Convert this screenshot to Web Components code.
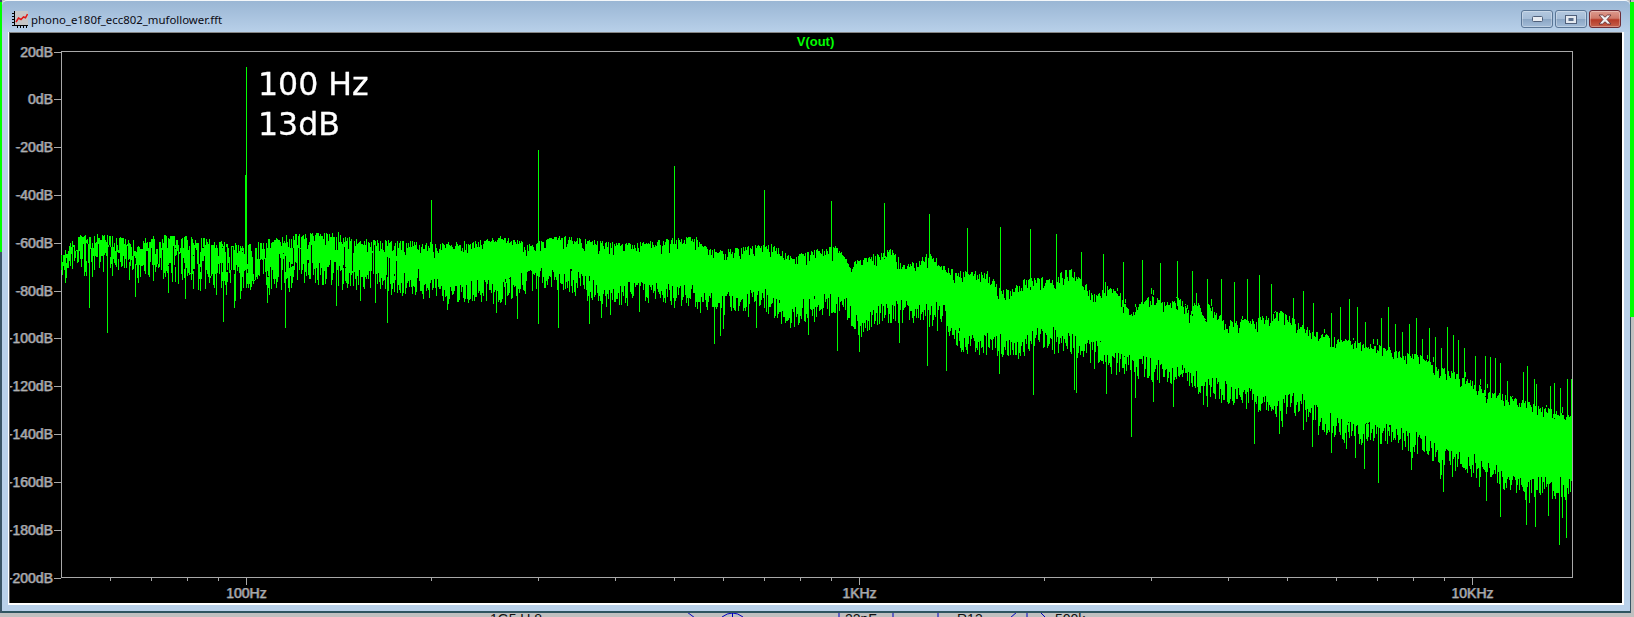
<!DOCTYPE html>
<html>
<head>
<meta charset="utf-8">
<title>phono_e180f_ecc802_mufollower.fft</title>
<style>
  html, body { margin: 0; padding: 0; height: 100%; overflow: hidden; }
  body {
    width: 1634px;
    height: 617px;
    display: flex;
    flex-direction: column;
    background:
      linear-gradient(#00ff00, #00ff00) no-repeat 0 2px / 2px 250px,
      linear-gradient(#00ff00, #00ff00) no-repeat 1630px 2px / 4px 315px,
      linear-gradient(#3a5566, #3a5566) no-repeat 0 0 / 2px 613px,
      linear-gradient(#3a5566, #3a5566) no-repeat 1630px 0 / 1px 613px,
      #c0c0c0;
  }
</style>
</head>
<body>
<template id="caption-button-tpl">
  <style>
    :host { display: block; width: 32px; height: 18px; }
    .btn {
      box-sizing: border-box;
      width: 100%;
      height: 100%;
      border: 1px solid #5a7696;
      border-radius: 3px;
      box-shadow: inset 0 0 0 1px rgba(255,255,255,.3);
      background: linear-gradient(#b3c8df 0%, #a6bdd7 48%, #8ba6c4 52%, #a3bcd8 100%);
      display: flex;
      align-items: center;
      justify-content: center;
    }
    :host([kind=close]) .btn {
      border-color: #6e2c36;
      background: linear-gradient(#dd9a8e 0%, #cf7a6a 45%, #b63a28 55%, #c4604c 100%);
    }
    svg { display: block; }
  </style>
  <div class="btn"></div>
</template>

<script>
// title bar buttons, min / max / close
const GLYPHS = {
  min: '<svg width="11" height="6" viewBox="0 0 11 6"><rect x=".5" y=".5" width="10" height="5" rx="1" fill="#e8ecf2" stroke="#50607a"/></svg>',
  max: '<svg width="12" height="9" viewBox="0 0 12 9"><rect x=".5" y=".5" width="11" height="8" fill="#e4e9f0" stroke="#50607a"/><rect x="3.5" y="3" width="5" height="3" fill="#5a6e8a"/></svg>',
  close: '<svg width="14" height="11" viewBox="0 0 14 11"><path d="M1 1h3.5L7 3.2 9.5 1H13L9 5.5l4 4.5H9.5L7 7.8 4.5 10H1l4-4.5z" fill="#f0f0f2" stroke="#5a2a30" stroke-width=".8"/></svg>'
};

class CaptionButton extends HTMLElement {
  constructor() {
    super();
    this.attachShadow({ mode: 'open' });
    this.shadowRoot.appendChild(document.getElementById('caption-button-tpl').content.cloneNode(true));
  }
  connectedCallback() {
    this.shadowRoot.querySelector('.btn').innerHTML = GLYPHS[this.getAttribute('kind')] || '';
  }
}
customElements.define('caption-button', CaptionButton);

class SpiceWindow extends HTMLElement {
  constructor() {
    super();
    this.attachShadow({ mode: 'open' });
    this.shadowRoot.innerHTML = `
      <style>
        :host {
          display: flex;
          flex-direction: column;
          flex: none;
          box-sizing: border-box;
          width: 1628px;
          height: 613px;
          margin-left: 2px;
          background: #b9d1ea;
          border-bottom: 2px solid #2f5560;
          border-top-left-radius: 5px;
          border-top-right-radius: 5px;
        }
        .bar {
          flex: none;
          box-sizing: border-box;
          height: 32px;
          display: flex;
          align-items: flex-start;
          border-top: 1px solid #f4f7fa;
          border-top-left-radius: 5px;
          border-top-right-radius: 5px;
          background: linear-gradient(#9ab6d4, #b8d0e9);
          padding: 9px 9px 0 10px;
        }
        .icon { flex: none; width: 16px; height: 17px; margin-top: 1px; }
        .name {
          flex: 1;
          margin-left: 3px;
          margin-top: 2px;
          font: 11.400px/16px "Noto Sans", "Open Sans", sans-serif;
          color: #0a0a14;
          white-space: nowrap;
        }
        .buttons { display: flex; gap: 2px; }
        .frame {
          flex: 1;
          min-height: 0;
          margin: 0 6px 6px;
          border-left: 1px solid #fff;
          border-right: 2px solid #fff;
          border-bottom: 2px solid #fff;
          display: flex;
        }
        .pane {
          flex: 1;
          min-width: 0;
          border-left: 1px solid #555;
          border-top: 1px solid #858585;
          background: #000;
        }
      </style>
      <div class="bar">
        <svg class="icon" viewBox="0 0 16 17" shape-rendering="crispEdges">
          <rect x="2" y="0" width="14" height="14" fill="#c6c6c6"/>
          <path d="M2.500 0v14.500H16" fill="none" stroke="#000"/>
          <path d="M0 2.500h2M0 5.500h2M0 8.500h2M0 11.500h2M0 14.500h2M5.500 15v2M8.500 15v2M11.500 15v2M14.500 15v2" stroke="#000"/>
          <path d="M4 11 6.500 7l2.500 1.500L11.500 6l2 .8L15.500 3" fill="none" stroke="#e01818" stroke-width="1.500" shape-rendering="auto"/>
        </svg>
        <div class="name"></div>
        <div class="buttons">
          <caption-button kind="min"></caption-button>
          <caption-button kind="max"></caption-button>
          <caption-button kind="close"></caption-button>
        </div>
      </div>
      <div class="frame"><div class="pane"><slot></slot></div></div>`;
  }
  connectedCallback() {
    this.shadowRoot.querySelector('.name').textContent = this.getAttribute('name') || '';
  }
}
customElements.define('spice-window', SpiceWindow);

class PlotNote extends HTMLElement {
  constructor() {
    super();
    this.attachShadow({ mode: 'open' });
    this.shadowRoot.innerHTML = `
      <style>
        :host {
          display: block;
          position: absolute;
          left: 248px;
          top: 31px;
          font: 31.600px/40px "DejaVu Sans", sans-serif;
          color: #fff;
          -webkit-text-stroke: .3px #fff;
          white-space: nowrap;
        }
      </style>
      <slot></slot>`;
  }
}
customElements.define('plot-note', PlotNote);

// envelope of the noise band, [x, y] in window coordinates
const TOP = [[61,255],[66,245],[80,235],[110,234],[130,240],[160,235],[200,236],[245,245],[270,238],[300,233],[340,232],[350,238],[400,240],[440,243],[480,240],[500,236],[530,243],[560,235],[590,240],[620,243],[660,240],[695,235],[702,245],[720,250],[770,243],[790,255],[805,252],[835,245],[850,262],[890,248],[905,265],[930,252],[945,267],[970,272],[985,268],[1000,287],[1010,290],[1020,280],[1040,277],[1055,280],[1060,272],[1070,268],[1085,283],[1095,295],[1105,285],[1120,293],[1130,312],[1150,293],[1165,302],[1180,297],[1190,313],[1195,295],[1205,320],[1208,303],[1225,320],[1260,317],[1280,310],[1300,323],[1320,333],[1350,340],[1380,345],[1420,355],[1450,370],[1490,390],[1530,402],[1573,417]];
const BOT = [[61,270],[80,272],[100,262],[130,270],[160,272],[200,280],[240,280],[270,285],[300,270],[340,275],[400,285],[440,290],[500,290],[530,280],[540,277],[580,280],[600,295],[650,290],[690,295],[700,300],[720,305],[760,295],[790,320],[800,310],[840,300],[860,325],[880,310],[900,310],[930,315],[940,310],[960,340],[1000,345],[1020,345],[1040,335],[1060,340],[1080,345],[1100,350],[1120,365],[1140,365],[1180,375],[1220,390],[1260,400],[1300,403],[1340,430],[1380,433],[1420,443],[1450,457],[1490,470],[1530,487],[1573,487]];
// harmonics, [x, top of the line]
const HARM = [[431,200],[538,150],[674,166],[764,190],[831,201],[884,203],[929,214],[967,228],[1000,227],[1030,229],[1056,234],[1081,252],[1103,254],[1123,262],[1142,260],[1160,263],[1177,261],[1192,271],[1207,279],[1221,279],[1234,282],[1247,279],[1259,275],[1271,284],[1293,298],[1303,291],[1313,303],[1331,313],[1340,307],[1349,299],[1357,307],[1365,322],[1381,318],[1388,307],[1395,324],[1402,332],[1409,324],[1416,318],[1422,339],[1429,328],[1435,337],[1441,348],[1447,327],[1453,335],[1458,340],[1464,348],[1475,356],[1485,356],[1490,357],[1495,358],[1500,363],[1507,381],[1523,372],[1527,366],[1534,379],[1536,384],[1550,386],[1554,383],[1560,388],[1567,379],[1571,379]];
// the long downward ones
const DIPS = [[89,307],[107,333],[135,297],[223,322],[234,308],[267,302],[285,327],[336,305],[360,301],[375,303],[387,323],[447,310],[505,305],[517,319],[538,324],[558,328],[589,324],[610,315],[714,343],[720,336],[723,329],[756,328],[808,335],[837,351],[859,352],[899,343],[927,365],[946,371],[999,374],[1033,394],[1074,389],[1076,393],[1106,393],[1131,437],[1135,398],[1153,402],[1173,407],[1182,377],[1203,405],[1207,407],[1254,443],[1279,434],[1312,447],[1331,453],[1364,469],[1378,483],[1411,470],[1440,479],[1443,492],[1486,501],[1500,517],[1526,525],[1535,527],[1548,516],[1559,545],[1562,518],[1566,538]];

function lerp(table, x) {
  for (let i = 1; i < table.length; i++) {
    if (x <= table[i][0]) {
      const a = table[i - 1], b = table[i];
      return a[1] + (b[1] - a[1]) * (x - a[0]) / (b[0] - a[0]);
    }
  }
  return table[table.length - 1][1];
}

function seeded(s) {
  return () => {
    s = (s + 0x6D2B79F5) | 0;
    let t = Math.imul(s ^ (s >>> 15), 1 | s);
    t = (t + Math.imul(t ^ (t >>> 7), 61 | t)) ^ t;
    return ((t ^ (t >>> 14)) >>> 0) / 4294967296;
  };
}

const X_AT = f => 246.5 + 613 * Math.log10(f / 100);

class FftPlot extends HTMLElement {
  constructor() {
    super();
    this.attachShadow({ mode: 'open' });
    this.shadowRoot.innerHTML = `
      <style>
        :host { display: block; position: relative; width: 1611px; height: 570px; overflow: hidden; }
        canvas, svg { position: absolute; left: 0; top: 0; display: block; }
        text {
          font: 14px "Liberation Sans", Arial, sans-serif;
          fill: #b0b0b0;
          stroke: #b0b0b0;
          stroke-width: .25px;
          text-shadow: -.6px 0 rgba(70,130,200,.55), .6px 0 rgba(200,130,70,.45);
        }
        text.trace { font: bold 13px "Liberation Sans", Arial, sans-serif; fill: #00ff00; stroke: none; text-shadow: none; }
      </style>
      <svg width="1611" height="570" viewBox="10 33 1611 570" shape-rendering="crispEdges"></svg>
      <canvas width="1611" height="570"></canvas>
      <slot name="note"></slot>`;
  }

  connectedCallback() {
    this.drawAxes();
    this.drawTrace();
  }

  drawAxes() {
    const c = '#a8a8a8';
    let s = `<text class="trace" x="815.500" y="46" text-anchor="middle">V(out)</text>`;
    s += `<rect x="61.500" y="51.500" width="1511" height="526" fill="none" stroke="${c}"/>`;
    for (let i = 0; i <= 11; i++) {
      const y = Math.round(51.5 + i * 47.82);
      s += `<rect x="54" y="${y}" width="7" height="1" fill="${c}"/>`;
      s += `<text x="53" y="${y + 5}" text-anchor="end">${20 - i * 20}dB</text>`;
    }
    for (const dec of [10, 100, 1000, 10000]) {
      for (let m = 1; m <= 9; m++) {
        const x = Math.floor(X_AT(dec * m));
        if (x < 62 || x > 1572) continue;
        s += `<rect x="${x}" y="578" width="1" height="${m === 1 ? 7 : 3}" fill="${c}"/>`;
      }
    }
    for (const [x, t] of [[246.5, '100Hz'], [859.5, '1KHz'], [1472.5, '10KHz']]) {
      s += `<text x="${x}" y="598" text-anchor="middle">${t}</text>`;
    }
    this.shadowRoot.querySelector('svg').innerHTML = s;
  }

  drawTrace() {
    const ctx = this.shadowRoot.querySelector('canvas').getContext('2d');
    const rnd = seeded(180802);
    ctx.translate(-10, -33);
    ctx.fillStyle = '#00ff00';
    const col = (x, a, b) => ctx.fillRect(x, Math.round(Math.min(a, b)), 1, Math.max(1, Math.round(Math.abs(b - a))));

    let prev = 255;
    for (let x = 61; x <= 1571; x++) {
      const T = lerp(TOP, x), B = lerp(BOT, x);
      const d = Math.min(1, (x - 61) / 420);
      // low end is a thin line, the top end is a solid band
      if (rnd() < 0.1 + d * 0.9) {
        col(x, T + rnd() * rnd() * 16, B + (rnd() - 0.45) * 24);
      } else {
        const k = 1 + Math.floor(rnd() * 3);
        for (let i = 0; i < k; i++) {
          const y = T + (B - T) * Math.pow(rnd(), 1.2);
          col(x, prev, y);
          prev = y;
        }
      }
      if (rnd() < 0.15) col(x, B - 8, B + rnd() * rnd() * 30);
      if (x > 1100 && rnd() < 0.08) col(x, T, T - rnd() * 7);
    }
    for (const [x, y] of DIPS) col(x, lerp(BOT, x) - 6, y);
    for (const [x, y] of HARM) col(x, y, lerp(TOP, x) + 8);
    // fundamental
    ctx.fillRect(246, 67, 1, 190);
    ctx.fillRect(245, 175, 2, 85);
  }
}
customElements.define('fft-plot', FftPlot);

class SchematicEdge extends HTMLElement {
  constructor() {
    super();
    this.attachShadow({ mode: 'open' });
    this.shadowRoot.innerHTML = `
      <style>
        :host { display: block; flex: none; height: 4px; overflow: hidden; }
        svg { display: block; }
        text { font: 14px "Liberation Sans", Arial, sans-serif; fill: #101010; }
      </style>
      <svg width="1634" height="4" viewBox="0 613 1634 4" fill="none" stroke="#0000c0">
        <text x="490" y="624" stroke="none">1G5 U 8</text>
        <path d="M687 612l8 6M722 617q10.500-8 21 0M732.500 612v6M839 612v6M893 612v6M938 612v6M1010 618l7-6M1027 612v6M1040 612l6 6"/>
        <text x="845" y="624" stroke="none">22pF</text>
        <text x="957" y="624" stroke="none">R13</text>
        <text x="1055" y="624" stroke="none">500k</text>
      </svg>`;
  }
}
customElements.define('schematic-edge', SchematicEdge);
</script>

<spice-window name="phono_e180f_ecc802_mufollower.fft">
  <fft-plot>
    <plot-note slot="note">100 Hz<br>13dB</plot-note>
  </fft-plot>
</spice-window>
<schematic-edge></schematic-edge>
</body>
</html>
